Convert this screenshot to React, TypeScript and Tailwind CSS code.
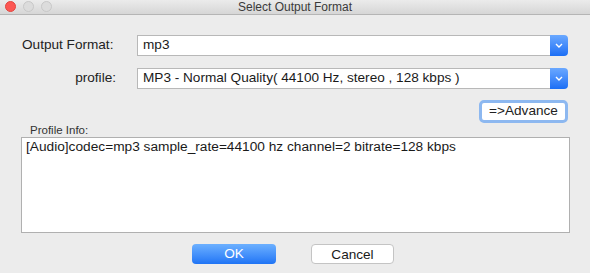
import React from 'react'

function Combo({ value }: { value: string }) {
  return (
    <div className="flex h-[21px] w-[431px] items-stretch">
      <div className="flex flex-1 items-center border border-r-0 border-[#b8b8b8] bg-white pl-[5px] text-[13.6px] text-[#1a1a1a]">
        {value}
      </div>
      <div className="flex w-[18px] items-center justify-center rounded-r-[4px] bg-gradient-to-b from-[#6aa8ff] to-[#1a6ef5]">
        <svg width="8" height="5" viewBox="0 0 8 5">
          <path d="M1 1 L4 4 L7 1" fill="none" stroke="white" strokeWidth="1.4" />
        </svg>
      </div>
    </div>
  )
}

export default function App() {
  return (
    <div
      className="flex h-[273px] w-[590px] flex-col bg-[#ececec] text-[#222]"
      style={{ fontFamily: '"Liberation Sans", Arial, sans-serif' }}
    >
      <div className="relative flex h-[15px] items-center justify-center border-b border-[#b5b5b5] bg-gradient-to-b from-[#ebebeb] to-[#d6d6d6]">
        <div className="absolute left-[5px] top-[1px] flex gap-[7px]">
          <span className="h-[11px] w-[11px] rounded-full border border-[#e2463f] bg-[#fc5753]" />
          <span className="h-[11px] w-[11px] rounded-full border border-[#c8c8c8] bg-[#dcdcdc]" />
          <span className="h-[11px] w-[11px] rounded-full border border-[#c8c8c8] bg-[#dcdcdc]" />
        </div>
        <span className="text-[12px] text-[#3a3a3a]">Select Output Format</span>
      </div>

      <div className="mt-[20px] flex items-center">
        <span className="ml-[22px] w-[115px] text-[13.6px]">Output Format:</span>
        <Combo value="mp3" />
      </div>

      <div className="mt-[12px] flex items-center">
        <span className="w-[116px] text-right text-[13.6px]">profile:</span>
        <span className="w-[21px]" />
        <Combo value="MP3 - Normal Quality( 44100 Hz, stereo , 128 kbps )" />
      </div>

      <div className="mt-[11px] flex justify-end pr-[22px]">
        <button className="flex h-[23px] w-[89px] items-center justify-center rounded-[5px] border-[3px] border-[#8db8f0] bg-white text-[13.6px] text-[#222]">
          =&gt;Advance
        </button>
      </div>

      <div className="ml-[30px] mt-[1px] text-[11.5px] leading-[13px] text-[#333]">Profile Info:</div>

      <div className="ml-[21px] h-[96px] w-[549px] border border-[#b0b0b0] bg-white px-[4px] pt-[1px] text-[13.7px] leading-[16px] text-[#1a1a1a]">
        [Audio]codec=mp3 sample_rate=44100 hz channel=2 bitrate=128 kbps
      </div>

      <div className="mt-[11px] flex">
        <button className="ml-[192px] h-[20px] w-[84px] rounded-[4px] bg-gradient-to-b from-[#6cb0ff] to-[#1f74f5] text-[13.6px] text-white">
          OK
        </button>
        <button className="ml-[35px] h-[20px] w-[83px] rounded-[4px] border border-[#c4c4c4] bg-white text-[13.6px] text-[#1a1a1a]">
          Cancel
        </button>
      </div>
    </div>
  )
}
